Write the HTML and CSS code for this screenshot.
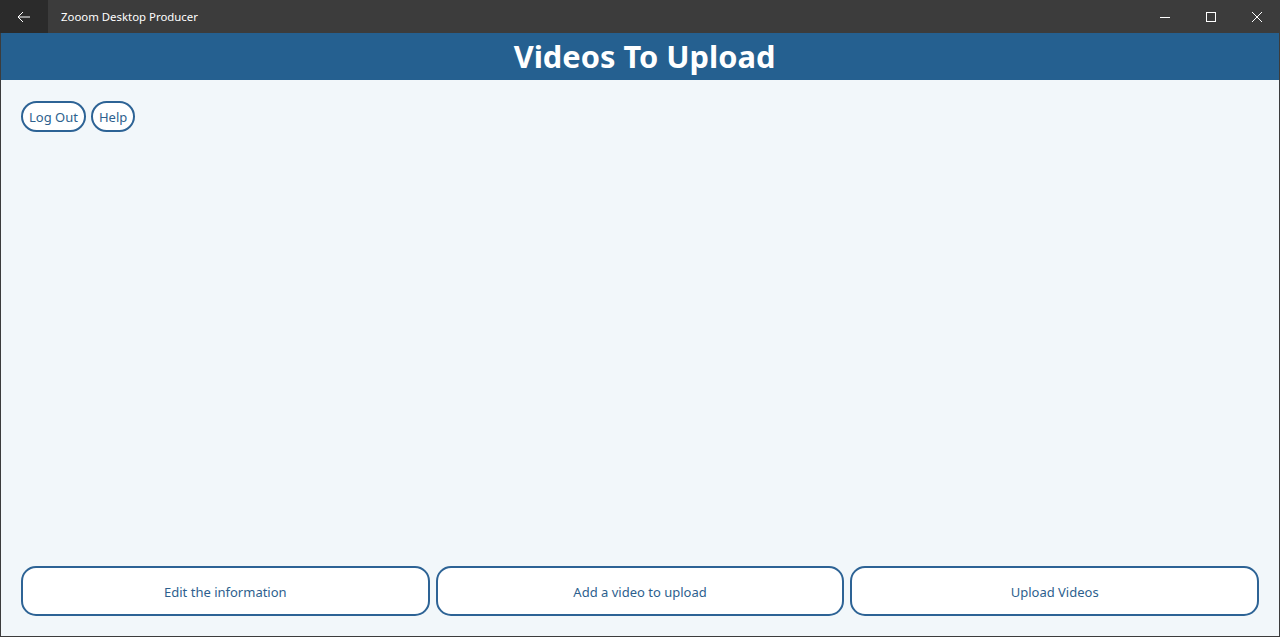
FILE: index.html
```html
<!DOCTYPE html>
<html>
<head>
<meta charset="utf-8">
<link rel="stylesheet" href="styles.css">
</head>
<body>
<div class="window">
  <div class="titlebar">
    <div class="back">
      <svg width="16" height="16" viewBox="0 0 16 16"><path d="M14 8H2M7 3L2 8l5 5" fill="none" stroke="#fff" stroke-width="1"/></svg>
    </div>
    <div class="apptitle">Zooom Desktop Producer</div>
    <div class="controls">
      <div class="ctl"><svg width="12" height="12" viewBox="0 0 12 12"><path d="M1 6.5h10" stroke="#fff" stroke-width="1"/></svg></div>
      <div class="ctl"><svg width="12" height="12" viewBox="0 0 12 12"><rect x="1.5" y="1.5" width="9" height="9" fill="none" stroke="#fff" stroke-width="1"/></svg></div>
      <div class="ctl"><svg width="12" height="12" viewBox="0 0 12 12"><path d="M1 1l10 10M11 1L1 11" stroke="#fff" stroke-width="1"/></svg></div>
    </div>
  </div>
  <div class="header">Videos To Upload</div>
  <div class="content">
    <div class="toprow">
      <button class="pill">Log Out</button>
      <button class="pill">Help</button>
    </div>
    <div class="spacer"></div>
    <div class="bottomrow">
      <button class="big">Edit the information</button>
      <button class="big">Add a video to upload</button>
      <button class="big">Upload Videos</button>
    </div>
  </div>
</div>
</body>
</html>
```

FILE: styles.css
```css
html, body {
  margin: 0;
  padding: 0;
  height: 100%;
}
body {
  font-family: "Noto Sans", "Open Sans", sans-serif;
}
.window {
  height: 637px;
  box-sizing: border-box;
  border: 1px solid #3c3c3c;
  border-top: none;
  display: flex;
  flex-direction: column;
  background: #f2f7fa;
}
.titlebar {
  height: 33px;
  background: #3c3c3c;
  display: flex;
  align-items: center;
  margin: 0 -1px;
}
.back {
  width: 48px;
  height: 33px;
  background: #2b2b2b;
  display: flex;
  align-items: center;
  justify-content: center;
}
.apptitle {
  color: #fff;
  font-size: 11.4px;
  margin-left: 13px;
  flex: 1;
}
.controls {
  display: flex;
  height: 33px;
}
.ctl {
  width: 46px;
  height: 33px;
  display: flex;
  align-items: center;
  justify-content: center;
}
.header {
  height: 47px;
  background: #256090;
  color: #fff;
  font-weight: bold;
  font-size: 30.8px;
  text-align: center;
  line-height: 46px;
  padding-left: 9px;
}
.content {
  flex: 1;
  display: flex;
  flex-direction: column;
  padding: 21px 20px 20px 20px;
}
.toprow {
  display: flex;
  gap: 5px;
}
.pill {
  height: 31px;
  border: 2px solid #2d6395;
  border-radius: 16px;
  background: #fff;
  color: #2d5f8e;
  font-family: "Noto Sans", sans-serif;
  font-size: 13px;
  padding: 1px 6px 0 6px;
}
.spacer { flex: 1; }
.bottomrow {
  display: flex;
  gap: 6px;
}
.big {
  flex: 1;
  height: 50px;
  border: 2px solid #2d6395;
  border-radius: 15px;
  background: #fff;
  color: #2d5f8e;
  font-family: "Noto Sans", sans-serif;
  font-size: 13px;
  padding-top: 2px;
}
```
